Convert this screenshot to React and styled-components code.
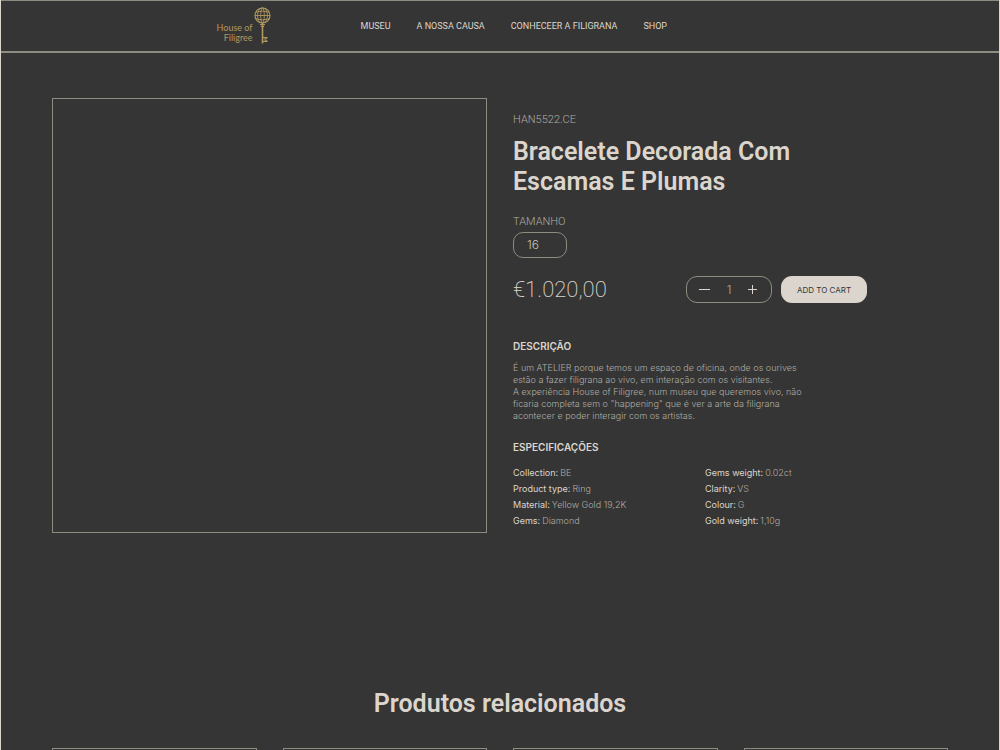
import React, { useState } from 'react';
import styled, { createGlobalStyle, ThemeProvider } from 'styled-components';

const theme = {
  bg: '#353535',
  line: '#8c8c80',
  text: '#dcd5cd',
  soft: '#cbc6bc',
  muted: '#b0aca3',
  gold: '#b3985f',
  body: 'Inter, "Liberation Sans", sans-serif',
  display: 'Roboto, "Liberation Sans", sans-serif',
  logo: 'Lato, "Liberation Sans", sans-serif',
};

const GlobalStyle = createGlobalStyle`
  * { box-sizing: border-box; }
  body {
    margin: 0;
    background: ${theme.bg};
    color: ${theme.text};
    font-family: ${theme.body};
  }
  h1, h2, h3, p, dl, dd, ul { margin: 0; padding: 0; }
  button, input, select { font: inherit; color: inherit; }
`;

const Page = styled.div`
  height: 100vh;
  overflow-y: auto;
  scrollbar-width: none;
  border: solid ${p => p.theme.text};
  border-width: 0 1px;
`;

const Header = styled.header`
  display: flex;
  align-items: center;
  gap: 90px;
  height: 53px;
  padding-left: 21.6%;
  border-top: 1px solid ${p => p.theme.line};
  border-bottom: 2px solid ${p => p.theme.line};
`;

const Logo = styled.a`
  display: flex;
  align-items: flex-end;
  gap: 1px;
  padding-bottom: 2px;
  color: ${p => p.theme.gold};
  font: 400 9px/10px ${p => p.theme.logo};
  text-align: right;
  text-decoration: none;
`;

const LogoText = styled.span`
  padding-bottom: 1px;
`;

const KeyIcon = styled.svg`
  width: 17px;
  height: 37px;
`;

const Nav = styled.nav`
  display: flex;
  gap: 26px;
`;

const NavLink = styled.a`
  color: ${p => p.theme.text};
  font: 400 9px/12px ${p => p.theme.display};
  text-decoration: none;
`;

const Main = styled.main`
  padding: 45px 51px;
`;

const Product = styled.section`
  display: grid;
  grid-template-columns: 1fr 1fr;
  gap: 26px;
  align-items: start;
`;

const Frame = styled.div`
  aspect-ratio: 1;
  border: 1px solid ${p => p.theme.line};
`;

const Details = styled.div`
  padding-top: 14px;
`;

const Label = styled.div`
  display: block;
  color: ${p => p.theme.muted};
  font: 300 11px/16px ${p => p.theme.display};
`;

const Title = styled.h1`
  max-width: 320px;
  margin: 9px 0 17px;
  font: 600 25px/30px ${p => p.theme.display};
`;

const SizeSelect = styled.select`
  display: block;
  appearance: none;
  width: 54px;
  height: 26px;
  margin-top: 2px;
  padding: 0 13px;
  border: 1px solid ${p => p.theme.line};
  border-radius: 10px;
  background: ${p => p.theme.bg};
  color: ${p => p.theme.soft};
  font: 300 12px/16px ${p => p.theme.body};
`;

const Purchase = styled.div`
  display: flex;
  align-items: center;
  gap: 9px;
  max-width: 354px;
  margin: 18px 0 35px;
`;

const Price = styled.div`
  flex: 1;
  font: 200 22px/27px ${p => p.theme.display};
`;

const Stepper = styled.div`
  display: flex;
  align-items: center;
  justify-content: space-between;
  width: 86px;
  height: 27px;
  padding: 0 14px 0 12px;
  border: 1px solid ${p => p.theme.line};
  border-radius: 11px;
`;

const StepButton = styled.button`
  display: flex;
  padding: 0;
  border: 0;
  background: none;
  cursor: pointer;
`;

const Quantity = styled.input`
  width: 20px;
  padding: 0;
  border: 0;
  background: none;
  color: ${p => p.theme.muted};
  font: 300 12px/16px ${p => p.theme.body};
  text-align: center;
`;

const CartButton = styled.button`
  width: 86px;
  height: 27px;
  padding: 0;
  border: 0;
  border-radius: 11px;
  background: ${p => p.theme.text};
  color: ${p => p.theme.bg};
  font-size: 8px;
  cursor: pointer;
`;

const SectionTitle = styled.h2`
  font-size: 10px;
  font-weight: 600;
  line-height: 16px;
`;

const Description = styled.p`
  max-width: 296px;
  margin: 8px 0 17px;
  color: ${p => p.theme.muted};
  font-size: 9px;
  font-weight: 300;
  line-height: 12px;
`;

const Specs = styled.div`
  display: grid;
  grid-template-columns: 192px 1fr;
  margin-top: 10px;
`;

const SpecList = styled.dl`
  font-size: 9px;
  line-height: 16px;
`;

const Spec = styled.div`
  display: flex;
  gap: 2px;

  dt { color: ${p => p.theme.text}; }
  dd { color: ${p => p.theme.muted}; font-weight: 300; }
`;

const Related = styled.section`
  margin-top: 156px;
`;

const RelatedTitle = styled.h2`
  margin-bottom: 29px;
  font: 600 25px/30px ${p => p.theme.display};
  text-align: center;
`;

const Cards = styled.div`
  display: grid;
  grid-template-columns: repeat(4, 1fr);
  gap: 26px;
`;

const links = ['MUSEU', 'A NOSSA CAUSA', 'CONHECEER A FILIGRANA', 'SHOP'];

const specs = [
  [['Collection', 'BE'], ['Product type', 'Ring'], ['Material', 'Yellow Gold 19,2K'], ['Gems', 'Diamond']],
  [['Gems weight', '0.02ct'], ['Clarity', 'VS'], ['Colour', 'G'], ['Gold weight', '1,10g']],
];

const Key = () => (
  <KeyIcon viewBox="0 0 17 37" fill="none" stroke="currentColor" aria-hidden="true">
    <circle cx="8.5" cy="8.5" r="7.5" strokeWidth="1.1" />
    <ellipse cx="8.5" cy="8.5" rx="5" ry="7.5" strokeWidth="0.8" />
    <ellipse cx="8.5" cy="8.5" rx="1.8" ry="7.5" strokeWidth="0.8" />
    <path d="M1 8.5h15M2 5.2Q8.5 3 15 5.2M2 11.8Q8.5 14 15 11.8" strokeWidth="0.9" />
    <path d="M6 17.5h5M6.8 19.5h3.4" strokeWidth="1" />
    <path d="M8.5 16v20.5" strokeWidth="1.6" />
    <path d="M9 30.5h4.5M9 34.5h4.5M12.8 30.5v1.5M12.8 33v1.5M11.2 30.5v4" strokeWidth="1.1" />
  </KeyIcon>
);

export default function App() {
  const [quantity, setQuantity] = useState(1);

  return (
    <ThemeProvider theme={theme}>
      <GlobalStyle />
      <Page>
        <Header>
          <Logo href="#">
            <LogoText>House of<br />Filigree</LogoText>
            <Key />
          </Logo>
          <Nav>
            {links.map(link => <NavLink href="#" key={link}>{link}</NavLink>)}
          </Nav>
        </Header>
        <Main>
          <Product>
            <Frame />
            <Details>
              <Label>HAN5522.CE</Label>
              <Title>Bracelete Decorada Com Escamas E Plumas</Title>
              <Label as="label" htmlFor="size">TAMANHO</Label>
              <SizeSelect id="size" defaultValue="16">
                <option>16</option>
              </SizeSelect>
              <Purchase>
                <Price>€1.020,00</Price>
                <Stepper>
                  <StepButton aria-label="Diminuir" onClick={() => setQuantity(Math.max(1, quantity - 1))}>
                    <svg width="11" height="11" stroke="currentColor"><path d="M0 5.5h11" /></svg>
                  </StepButton>
                  <Quantity aria-label="Quantidade" value={quantity} readOnly />
                  <StepButton aria-label="Aumentar" onClick={() => setQuantity(quantity + 1)}>
                    <svg width="9" height="9" stroke="currentColor"><path d="M0 4.5h9M4.5 0v9" /></svg>
                  </StepButton>
                </Stepper>
                <CartButton>ADD TO CART</CartButton>
              </Purchase>
              <SectionTitle>DESCRIÇÃO</SectionTitle>
              <Description>
                É um ATELIER porque temos um espaço de oficina, onde os ourives
                estão a fazer filigrana ao vivo, em interação com os visitantes.
                <br />
                A experiência House of Filigree, num museu que queremos vivo, não
                ficaria completa sem o "happening" que é ver a arte da filigrana
                acontecer e poder interagir com os artistas.
              </Description>
              <SectionTitle>ESPECIFICAÇÕES</SectionTitle>
              <Specs>
                {specs.map((list, i) => (
                  <SpecList key={i}>
                    {list.map(([name, value]) => (
                      <Spec key={name}><dt>{name}:</dt><dd>{value}</dd></Spec>
                    ))}
                  </SpecList>
                ))}
              </Specs>
            </Details>
          </Product>
          <Related>
            <RelatedTitle>Produtos relacionados</RelatedTitle>
            <Cards>
              <Frame /><Frame /><Frame /><Frame />
            </Cards>
          </Related>
        </Main>
      </Page>
    </ThemeProvider>
  );
}
